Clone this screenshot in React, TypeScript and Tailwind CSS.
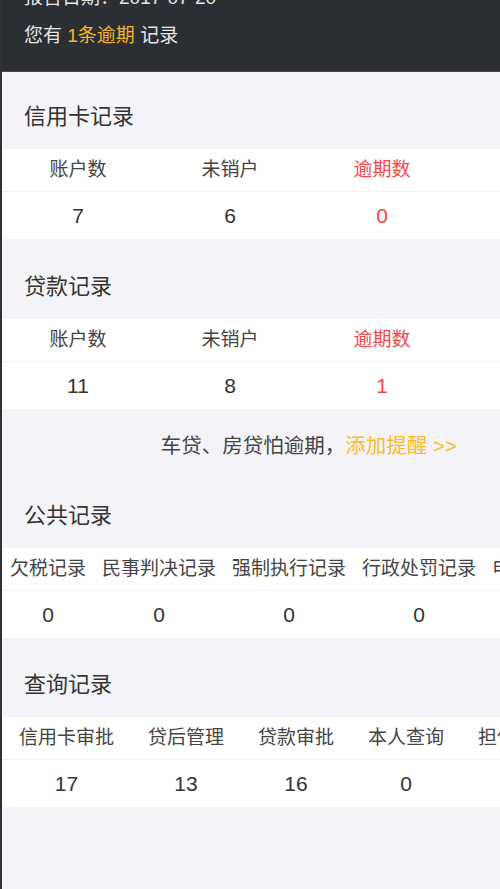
import React from 'react';

const cjk = { fontFamily: '"Liberation Sans", "Noto Sans CJK SC", sans-serif' };

interface Cell {
  label: string;
  value: string;
  alert?: boolean;
}

const creditCells: Cell[] = [
  { label: '账户数', value: '7' },
  { label: '未销户', value: '6' },
  { label: '逾期数', value: '0', alert: true },
];

const loanCells: Cell[] = [
  { label: '账户数', value: '11' },
  { label: '未销户', value: '8' },
  { label: '逾期数', value: '1', alert: true },
];

const publicCells: Cell[] = [
  { label: '欠税记录', value: '0' },
  { label: '民事判决记录', value: '0' },
  { label: '强制执行记录', value: '0' },
  { label: '行政处罚记录', value: '0' },
  { label: '电信欠费记录', value: '0' },
];

const queryCells: Cell[] = [
  { label: '信用卡审批', value: '17' },
  { label: '贷后管理', value: '13' },
  { label: '贷款审批', value: '16' },
  { label: '本人查询', value: '0' },
  { label: '担保资格审查', value: '0' },
];

const SectionTitle = ({ title, top = 'pt-[32px]' }: { title: string; top?: string }) => (
  <div className={`${top} pb-[16px] pl-[22px]`}>
    <h2 className="text-[22px] leading-[32px] text-[#333]">{title}</h2>
  </div>
);

// 每列：表头 + 数值，横向可滚动
const StatTable = ({
  cells,
  colClass = '',
  padClass = '',
}: {
  cells: Cell[];
  colClass?: string;
  padClass?: string;
}) => (
  <div className="bg-white overflow-hidden flex flex-nowrap">
    {cells.map((c, i) => (
      <div key={i} className={`${colClass} shrink-0 flex flex-col`}>
        <div
          className={`${padClass} h-[43px] border-b border-[#f1f1f5] flex items-center justify-center whitespace-nowrap text-[19px] ${
            c.alert ? 'text-[#f5484a]' : 'text-[#444]'
          }`}
        >
          {c.label}
        </div>
        <div
          className={`${padClass} h-[47px] flex items-center justify-center text-[21px] ${
            c.alert ? 'text-[#f5484a]' : 'text-[#333]'
          }`}
        >
          {c.value}
        </div>
      </div>
    ))}
    <div className="flex-1 min-w-0">
      <div className="h-[43px] border-b border-[#f1f1f5]" />
    </div>
  </div>
);

export default function App() {
  return (
    <div style={cjk} className="min-h-screen bg-[#f4f4f8] border-l-2 border-[#2f3135] overflow-hidden">
      {/* 顶部报告信息 */}
      <div className="bg-[#2b2e33] -mt-[21px] pb-[16px] pl-[22px] border-b border-[#45484d]">
        <p className="text-[19px] leading-[38px] text-[#e6e6e6]">报告日期：2017-07-20</p>
        <p className="text-[19px] leading-[38px] text-[#e6e6e6]">
          您有 <span className="text-[#f2b630]">1条逾期</span> 记录
        </p>
      </div>

      <SectionTitle title="信用卡记录" top="pt-[29px]" />
      <StatTable cells={creditCells} colClass="w-[152px]" />

      <SectionTitle title="贷款记录" />
      <StatTable cells={loanCells} colClass="w-[152px]" />

      {/* 提醒 */}
      <div className="h-[75px] flex items-center justify-end pr-[43px] text-[20.5px] text-[#444] whitespace-nowrap">
        车贷、房贷怕逾期，<span className="text-[#fbbb2a]">添加提醒 &gt;&gt;</span>
      </div>

      <SectionTitle title="公共记录" top="pt-[16px]" />
      <StatTable cells={publicCells} padClass="px-[8px]" />

      <SectionTitle title="查询记录" top="pt-[31px]" />
      <StatTable cells={queryCells} padClass="px-[17px]" />
    </div>
  );
}
